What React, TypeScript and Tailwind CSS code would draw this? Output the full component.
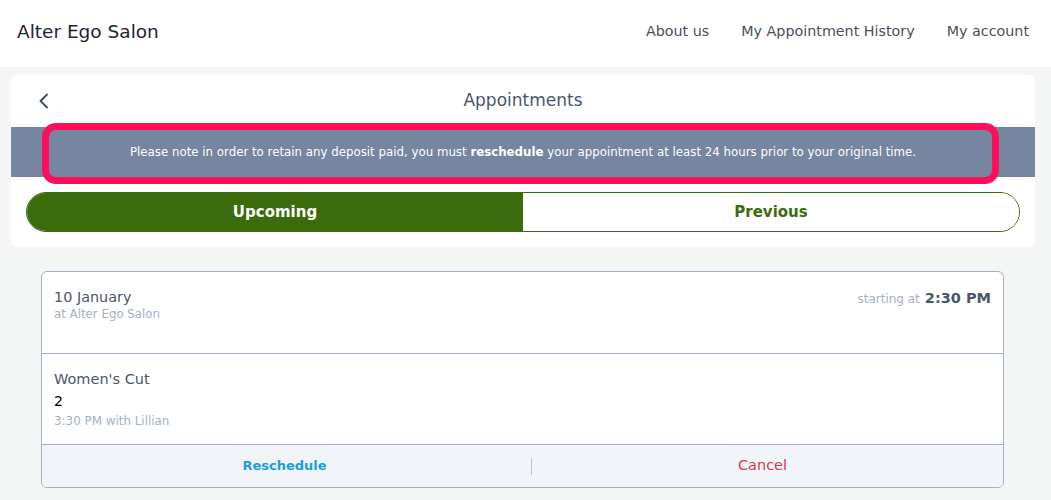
import React from "react";

const font = { fontFamily: '"DejaVu Sans", "Noto Sans", sans-serif' };

export default function App() {
  return (
    <div className="min-h-[500px] bg-[#f4f6f6]" style={font}>
      <header className="h-[67px] bg-white flex items-center justify-between pl-[17px] pr-[22px] pb-[4px]">
        <div className="text-[18.5px] font-medium text-[#1e2433]">Alter Ego Salon</div>
        <nav className="flex items-center gap-[32px] text-[14.3px] text-[#4a4f5c]">
          <span>About us</span>
          <span>My Appointment History</span>
          <span>My account</span>
        </nav>
      </header>

      <div className="ml-[11px] mr-[16px] mt-[8px] bg-white rounded-[6px]">
        <div className="relative h-[52px] flex items-center justify-center">
          <svg className="absolute left-[27px] top-[18px]" width="12" height="16" viewBox="0 0 12 16" fill="none">
            <path d="M9 1.5 L2.5 8 L9 14.5" stroke="#3c4a63" strokeWidth="1.8" strokeLinecap="round" strokeLinejoin="round" />
          </svg>
          <div className="text-[17px] text-[#4a5568]">Appointments</div>
        </div>
        <div className="relative h-[50px] bg-[#7685a0] flex items-center justify-center pt-[2px]">
          <p className="text-[11.8px] text-white">
            Please note in order to retain any deposit paid, you must <b>reschedule</b> your appointment at least 24 hours prior to your original time.
          </p>
          <div className="absolute left-[31px] top-[-4px] w-[957px] h-[61px] rounded-[14px] border-[7px] border-[#ff0f5a] pointer-events-none" />
        </div>
        <div className="px-[15px] pt-[15px] pb-[15px]">
          <div className="flex h-[40px] rounded-full border border-[#3b6b0b] overflow-hidden">
            <div className="flex-1 bg-[#3b6b0b] flex items-center justify-center text-white text-[15px] font-bold">Upcoming</div>
            <div className="flex-1 bg-white flex items-center justify-center text-[#3b6b0b] text-[15px] font-semibold">Previous</div>
          </div>
        </div>
      </div>

      <div className="ml-[41px] mr-[47px] mt-[24px] border border-[#a3b0c4] rounded-[6px] overflow-hidden bg-white">
        <div className="h-[82px] px-[12px] pt-[16px] flex justify-between border-b border-[#a3b0c4]">
          <div>
            <div className="text-[14.4px] font-medium text-[#4a5568] leading-[18px]">10 January</div>
            <div className="text-[11.8px] text-[#a3afc2] leading-[17px]">at Alter Ego Salon</div>
          </div>
          <div className="flex items-baseline gap-[5px] h-[20px]">
            <span className="text-[12px] text-[#a3afc2]">starting at</span>
            <span className="text-[14.5px] font-bold text-[#4a5568]">2:30 PM</span>
          </div>
        </div>
        <div className="h-[91px] px-[12px] pt-[16px] border-b border-[#a3b0c4]">
          <div className="text-[14.5px] font-medium text-[#4a5568] leading-[18px]">Women's Cut</div>
          <div className="text-[14px] text-black leading-[24px] pt-[1px]">2</div>
          <div className="text-[11.9px] text-[#a3afc2] leading-[16px]">3:30 PM with Lillian</div>
        </div>
        <div className="h-[42px] bg-[#f1f5f9] flex items-center">
          <div className="w-[485px] text-center text-[13px] font-semibold text-[#1a9fd6]">Reschedule</div>
          <div className="w-px h-[17px] bg-[#b9c2cf] ml-[4px]" />
          <div className="flex-1 pr-[10px] text-center text-[14.5px] font-medium text-[#e0344f]">Cancel</div>
        </div>
      </div>
    </div>
  );
}
